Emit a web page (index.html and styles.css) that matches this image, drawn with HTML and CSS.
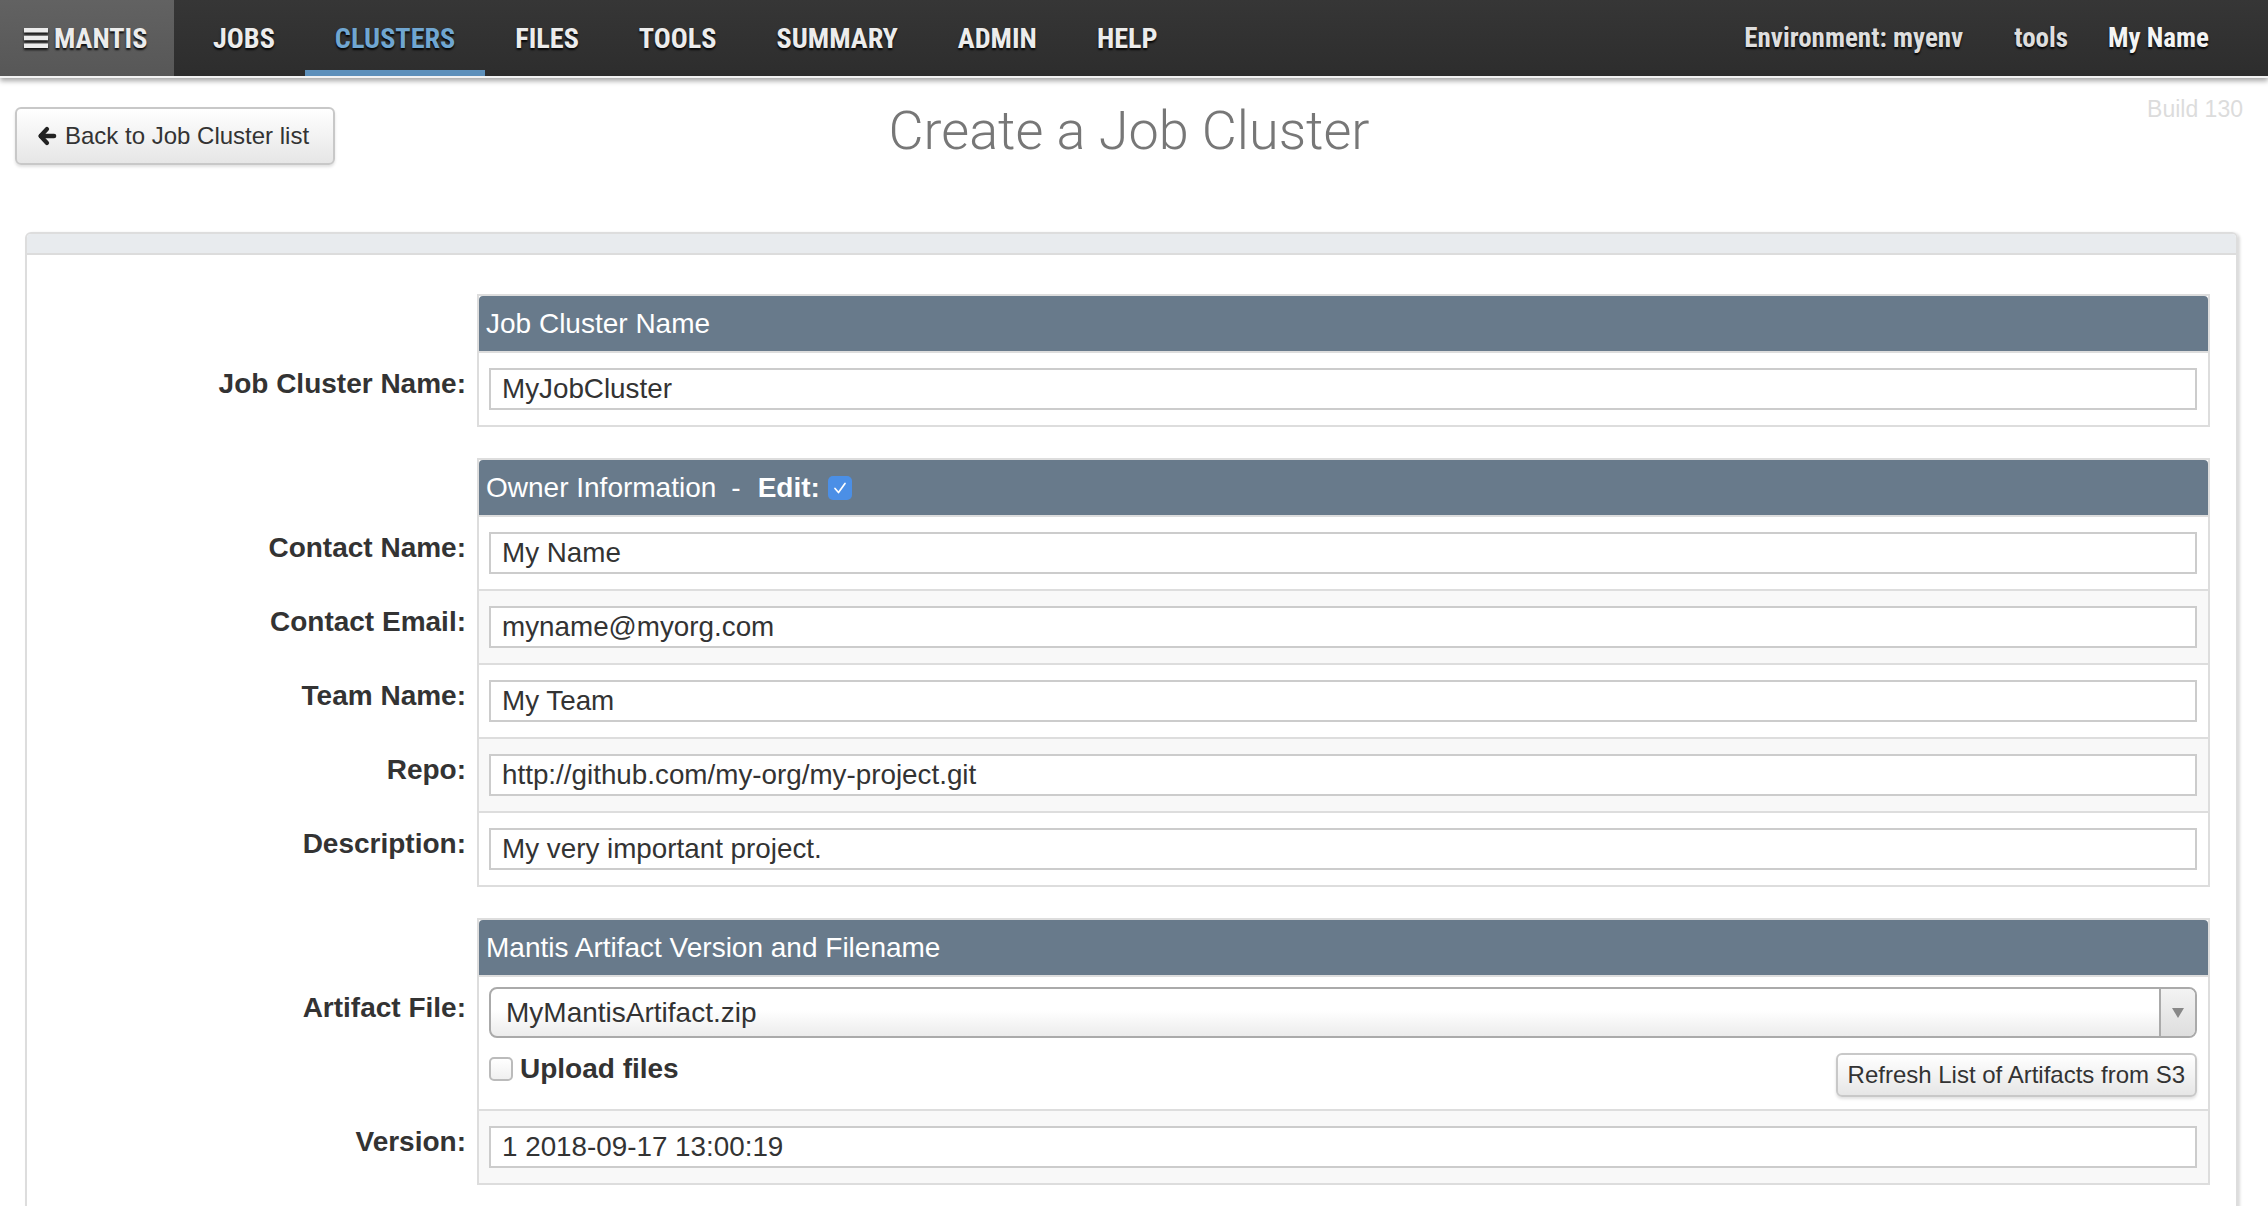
FILE: index.html
```html
<!DOCTYPE html>
<html lang="en">
<head>
<meta charset="utf-8">
<title>Create a Job Cluster</title>
<link rel="stylesheet" href="styles.css">
</head>
<body>
<nav class="navbar">
  <a class="brand"><svg class="hamburger" viewBox="0 0 24 20" width="24" height="20"><rect y="0" width="24" height="4.5"/><rect y="7.75" width="24" height="4.5"/><rect y="15.5" width="24" height="4.5"/></svg>MANTIS</a>
  <ul class="nav-main">
    <li><a>JOBS</a></li>
    <li class="active"><a>CLUSTERS</a></li>
    <li><a>FILES</a></li>
    <li><a>TOOLS</a></li>
    <li><a>SUMMARY</a></li>
    <li><a>ADMIN</a></li>
    <li><a>HELP</a></li>
  </ul>
  <ul class="nav-right">
    <li class="env">Environment: myenv</li>
    <li class="tools">tools</li>
    <li class="user">My Name</li>
  </ul>
</nav>

<main class="page">
  <header class="page-head">
    <button class="btn back"><svg class="arrow" viewBox="0 0 20 20" width="20" height="20"><path d="M10 3 L3.5 10 L10 17" fill="none" stroke="#222" stroke-width="4.2" stroke-linecap="round" stroke-linejoin="round"/><path d="M4 10 H17" stroke="#222" stroke-width="4.6" stroke-linecap="round"/></svg>Back to Job Cluster list</button>
    <h1 class="title">Create a Job Cluster</h1>
    <div class="build">Build 130</div>
  </header>

  <section class="panel">
    <div class="panel-heading"></div>
    <div class="panel-body">

      <div class="form-section">
        <div class="label-cell"></div>
        <div class="sec-header"><div class="sec-title">Job Cluster Name</div></div>
        <label class="label-cell">Job Cluster Name:</label>
        <div class="cell last"><input class="field" value="MyJobCluster"></div>
      </div>

      <div class="form-section">
        <div class="label-cell"></div>
        <div class="sec-header"><div class="sec-title">Owner Information<span class="dash">-</span><b>Edit:</b><span class="check-on"><svg viewBox="0 0 24 24" width="24" height="24"><path d="M7 12.5 L10.5 16.5 L17 7.5" fill="none" stroke="#fff" stroke-width="1.7" stroke-linecap="round" stroke-linejoin="round"/></svg></span></div></div>
        <label class="label-cell">Contact Name:</label>
        <div class="cell"><input class="field" value="My Name"></div>
        <label class="label-cell">Contact Email:</label>
        <div class="cell alt"><input class="field" value="myname@myorg.com"></div>
        <label class="label-cell">Team Name:</label>
        <div class="cell"><input class="field" value="My Team"></div>
        <label class="label-cell">Repo:</label>
        <div class="cell alt"><input class="field" value="http://github.com/my-org/my-project.git"></div>
        <label class="label-cell">Description:</label>
        <div class="cell last"><input class="field" value="My very important project."></div>
      </div>

      <div class="form-section">
        <div class="label-cell"></div>
        <div class="sec-header"><div class="sec-title">Mantis Artifact Version and Filename</div></div>
        <label class="label-cell">Artifact File:</label>
        <div class="cell artifact">
          <div class="select"><span class="select-value">MyMantisArtifact.zip</span><span class="select-arrow"><span class="tri"></span></span></div>
          <div class="upload-row">
            <label class="upload"><span class="checkbox"></span>Upload files</label>
            <button class="btn refresh">Refresh List of Artifacts from S3</button>
          </div>
        </div>
        <label class="label-cell">Version:</label>
        <div class="cell alt last"><input class="field" value="1 2018-09-17 13:00:19"></div>
      </div>

    </div>
  </section>
</main>
</body>
</html>
```

FILE: styles.css
```css
* { box-sizing: border-box; }
html, body { margin: 0; padding: 0; }
body {
  font-family: "Liberation Sans", Arial, Helvetica, sans-serif;
  color: #333;
  background: #fff;
}

/* ---------- navbar ---------- */
.navbar {
  position: relative;
  z-index: 2;
  display: flex;
  align-items: stretch;
  height: 78px;
  background: linear-gradient(#363636, #2d2d2d);
  border-bottom: 2px solid #f3f3f3;
  box-shadow: 0 3px 5px rgba(0, 0, 0, 0.35);
  font-family: "Liberation Sans Narrow", "Roboto Condensed", "Liberation Sans", sans-serif;
  font-weight: 700;
  font-size: 28.2px;
  color: #ececec;
  text-shadow: 0 2px 2px rgba(0, 0, 0, 0.9);
}
.brand {
  width: 174px;
  display: flex;
  align-items: center;
  gap: 6px;
  padding-left: 24px;
  background: linear-gradient(#626262, #575757);
}
.hamburger { fill: #ececec; filter: drop-shadow(0 2px 1px rgba(0,0,0,.8)); }
.nav-main, .nav-right {
  list-style: none;
  margin: 0;
  padding: 0;
  display: flex;
}
.nav-main { margin-left: 9px; }
.nav-main li a {
  display: flex;
  align-items: center;
  height: 100%;
  padding: 0 30px;
}
.nav-main li.active a {
  color: #70a6d1;
  box-shadow: inset 0 -6px 0 #5d90bb;
}
.nav-right {
  margin-left: auto;
  align-items: center;
  padding-right: 59px;
  font-size: 27px;
  color: #dedede;
}
.nav-right .env { margin-right: 51px; }
.nav-right .tools { margin-right: 40px; }
.nav-right .user { color: #f4f4f4; }

/* ---------- page head ---------- */
.page { padding: 0 30px 40px 25px; }
.page-head {
  display: grid;
  grid-template-columns: 1fr auto 1fr;
  align-items: start;
  margin: 0 -5px 0 -10px;
  padding-top: 29px;
}
.btn {
  font-family: "Liberation Sans", Arial, sans-serif;
  font-size: 24px;
  color: #333;
  background: linear-gradient(#ffffff, #e6e6e6);
  border: 2px solid #c8c8c8;
  border-radius: 6px;
  box-shadow: 0 2px 3px rgba(0, 0, 0, 0.12);
  cursor: pointer;
}
.back {
  justify-self: start;
  width: 320px;
  height: 58px;
  display: flex;
  align-items: center;
  gap: 8px;
  padding: 0 0 0 20px;
}
.title {
  margin: -5px 0 0 0;
  font-family: "Roboto", "Liberation Sans", sans-serif;
  font-weight: 300;
  font-size: 54px;
  line-height: 58px;
  color: #777;
}
.build {
  justify-self: end;
  margin-top: -10px;
  font-size: 23px;
  line-height: 24px;
  color: #dcdcdc;
}

/* ---------- panel ---------- */
.panel {
  margin-top: 67px;
  border: 2px solid #ddd;
  border-radius: 6px;
  box-shadow: 2px 1px 3px rgba(0, 0, 0, 0.15);
}
.panel-heading {
  height: 21px;
  background: #e8ebee;
  border-bottom: 2px solid #dcdcdc;
  border-radius: 4px 4px 0 0;
}
.panel-body { padding: 39px 26px 0 0; }

.form-section {
  display: grid;
  grid-template-columns: 450px 1fr;
  margin-bottom: 31px;
}
.label-cell {
  display: block;
  text-align: right;
  padding: 17px 11px 0 0;
  font-weight: 700;
  font-size: 28px;
  line-height: 32px;
  color: #333;
}
.sec-header {
  border: 2px solid #ddd;
  border-bottom: 0;
}
.sec-title {
  height: 55px;
  line-height: 55px;
  padding-left: 7px;
  background: #687a8b;
  border-radius: 4px 4px 0 0;
  color: #fff;
  font-size: 28px;
}
.sec-title b { font-weight: 700; }
.dash { margin: 0 17px 0 15px; }
.check-on {
  display: inline-flex;
  vertical-align: middle;
  margin: -4px 0 0 8px;
  width: 24px;
  height: 24px;
  border-radius: 5px;
  background: #4b8fe6;
}
.cell {
  border: 2px solid #ddd;
  border-bottom: 0;
  padding: 15px 11px 15px 10px;
  background: #fff;
}
.cell.alt { background: #f8f8f8; }
.cell.last { border-bottom: 2px solid #ddd; }
.field {
  display: block;
  width: 100%;
  height: 42px;
  border: 2px solid #ccc;
  padding: 0 11px;
  font-family: "Liberation Sans", Arial, sans-serif;
  font-size: 27.8px;
  color: #333;
  background: #fff;
  outline: none;
}

/* artifact row */
.cell.artifact { padding-top: 10px; padding-bottom: 12px; }
.select {
  display: flex;
  height: 51px;
  border: 2px solid #aaa;
  border-radius: 8px;
  background: linear-gradient(#ffffff 45%, #ececec);
  overflow: hidden;
}
.select-value {
  flex: 1;
  padding-left: 15px;
  font-size: 28px;
  line-height: 47px;
  color: #333;
}
.select-arrow {
  width: 36px;
  border-left: 2px solid #aaa;
  background: linear-gradient(#f3f3f3, #dedede);
  display: flex;
  align-items: center;
  justify-content: center;
}
.tri {
  width: 0;
  height: 0;
  border-left: 6px solid transparent;
  border-right: 6px solid transparent;
  border-top: 10px solid #888;
}
.upload-row {
  display: flex;
  justify-content: space-between;
  align-items: flex-start;
  margin-top: 15px;
}
.upload {
  display: flex;
  align-items: center;
  gap: 7px;
  font-weight: 700;
  font-size: 28px;
  line-height: 32px;
  color: #333;
}
.checkbox {
  width: 24px;
  height: 24px;
  border: 2px solid #bbb;
  border-radius: 5px;
  background: linear-gradient(#fff, #f0f0f0);
}
.refresh {
  height: 44px;
  padding: 0 10px;
  white-space: nowrap;
}
```
